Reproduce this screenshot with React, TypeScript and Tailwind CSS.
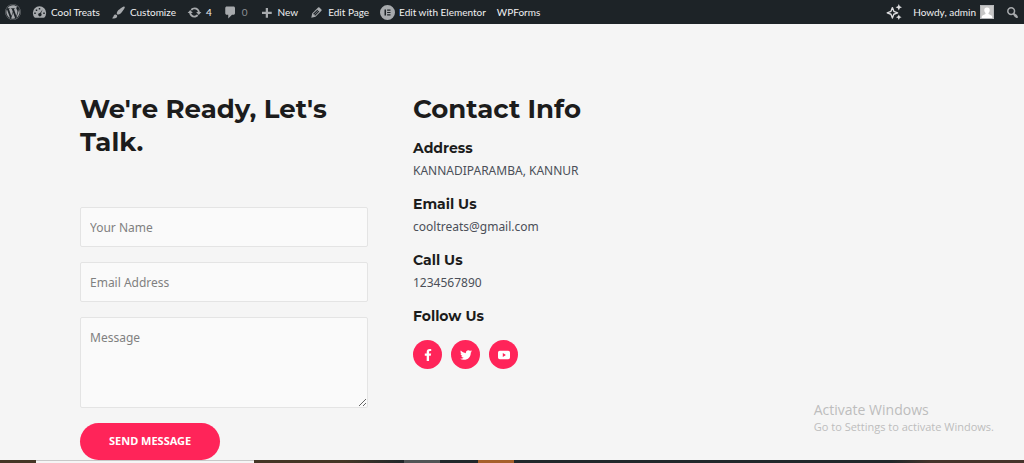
import React from 'react';
import { FaFacebookF, FaTwitter, FaWordpress } from 'react-icons/fa';

interface IconProps {
  className?: string;
  children: React.ReactNode;
}

// 20x20 grid, same as the admin bar icon set
const Icon: React.FC<IconProps> = ({ className = 'size-[15px]', children }) => (
  <svg viewBox="0 0 20 20" fill="currentColor" aria-hidden="true" className={`shrink-0 ${className}`}>
    {children}
  </svg>
);

const DashboardIcon = () => (
  <Icon>
    <path
      fillRule="evenodd"
      d="M3.8 17h12.4a8.9 8.9 0 1 0-12.4 0zM9 4h2v2H9zM5 6h2v2H5zM14.3 5.6 12 11.1a2.3 2.3 0 1 1-1.3-.5zM3 10h2v2H3zM15 10h2v2h-2z"
    />
  </Icon>
);

const BrushIcon = () => (
  <Icon>
    <path d="M18.33 3.57s.27-.8-.31-1.36c-.53-.52-1.22-.24-1.22-.24-.61.3-5.76 3.47-7.67 5.57-.86.96-2.06 3.79-1.09 4.82.92.98 3.96-.17 4.79-1 2.06-2.06 5.21-7.17 5.5-7.79zM1.4 17.65c2.37-1.56 1.46-3.41 3.23-4.64.93-.65 2.22-.62 3.08.29.63.67.8 2.57-.16 3.46-1.57 1.45-4 1.55-6.15.89z" />
  </Icon>
);

const UpdateIcon = () => (
  <Icon>
    <path d="M10.2 3.28c3.53 0 6.43 2.61 6.92 6h2.08l-3.5 4-3.5-4h2.32c-.45-1.97-2.21-3.45-4.32-3.45-1.45 0-2.73.71-3.54 1.78L4.95 5.66C6.23 4.2 8.11 3.28 10.2 3.28zm-.4 13.44c-3.52 0-6.43-2.61-6.92-6H.8l3.5-4 3.5 4H5.48c.45 1.97 2.21 3.45 4.32 3.45 1.45 0 2.73-.71 3.54-1.78l1.71 1.95c-1.28 1.46-3.15 2.38-5.25 2.38z" />
  </Icon>
);

const CommentIcon = () => (
  <Icon>
    <path d="M5 2h9c1.1 0 2 .9 2 2v7c0 1.1-.9 2-2 2h-2l-5 5v-5H5c-1.1 0-2-.9-2-2V4c0-1.1.9-2 2-2z" />
  </Icon>
);

const PlusIcon = () => (
  <Icon>
    <path d="M17 9v3h-5v5H9v-5H4V9h5V4h3v5z" />
  </Icon>
);

const EditIcon = () => (
  <Icon>
    <path
      fillRule="evenodd"
      d="M13.89 3.39l2.71 2.72c.46.46.42 1.24.03 1.64l-8.01 8.02-5.56 1.16 1.16-5.58s7.6-7.63 7.99-8.03c.39-.39 1.22-.39 1.68.07zm-2.73 2.79l-5.59 5.61 1.11 1.11 5.54-5.65zm-2.97 8.23l5.58-5.6-1.07-1.08-5.59 5.6z"
    />
  </Icon>
);

const ElementorIcon = () => (
  <Icon>
    <path fillRule="evenodd" d="M10 0a10 10 0 1 1 0 20 10 10 0 0 1 0-20zM6 6v8h2V6zM9.5 6v1.6H14V6zM9.5 9.2v1.6H14V9.2zM9.5 12.4V14H14v-1.6z" />
  </Icon>
);

const SparkleIcon = () => (
  <Icon className="size-4 text-[#dcdcde]">
    <path
      d="M8 4.5 9.8 9.2 14.5 11 9.8 12.8 8 17.5 6.2 12.8 1.5 11 6.2 9.2z"
      fill="none"
      stroke="currentColor"
      strokeWidth="1.7"
      strokeLinejoin="round"
    />
    <path d="M16 0l1.2 2.8L20 4l-2.8 1.2L16 8l-1.2-2.8L12 4l2.8-1.2zM16 13l1.1 2.4 2.4 1.1-2.4 1.1L16 20l-1.1-2.4-2.4-1.1 2.4-1.1z" />
  </Icon>
);

const SearchIcon = () => (
  <Icon>
    <path
      fillRule="evenodd"
      d="M12.14 4.18c1.87 1.87 2.11 4.75.72 6.89.12.1.22.21.36.31.2.16.47.36.81.59.34.24.56.39.66.47.42.31.73.57.94.78.32.32.6.65.84 1 .25.35.44.69.59 1.04.14.35.21.68.18 1-.02.32-.14.59-.36.81s-.49.34-.81.36c-.31.02-.65-.04-.99-.19-.35-.14-.7-.34-1.04-.59-.35-.24-.68-.52-1-.84-.21-.21-.47-.52-.77-.93-.1-.13-.25-.35-.47-.66-.22-.32-.4-.57-.56-.78-.16-.2-.29-.35-.44-.5-2.07 1.09-4.69.76-6.44-.98-2.14-2.15-2.14-5.64 0-7.78 2.15-2.15 5.63-2.15 7.78 0zm-1.41 6.36c1.36-1.37 1.36-3.58 0-4.95-1.37-1.37-3.59-1.37-4.95 0-1.37 1.37-1.37 3.58 0 4.95 1.36 1.37 3.58 1.37 4.95 0z"
    />
  </Icon>
);

const YoutubeIcon = () => (
  <Icon className="size-3">
    <path fillRule="evenodd" d="M3 3h14a3 3 0 0 1 3 3v8a3 3 0 0 1-3 3H3a3 3 0 0 1-3-3V6a3 3 0 0 1 3-3zM8 6.8v6.4l5.2-3.2z" />
  </Icon>
);

interface BarLinkProps {
  icon?: React.ReactNode;
  label: string;
  muted?: boolean;
}

const BarLink: React.FC<BarLinkProps> = ({ icon, label, muted }) => (
  <a href="#" className="flex items-center gap-1 whitespace-nowrap">
    {icon}
    <span className={muted ? 'text-[#8c8f94]' : 'text-[#f0f0f1]'}>{label}</span>
  </a>
);

const AdminBar = () => (
  <header className="flex h-6 items-center justify-between bg-[#1d2327] pr-1 pl-[5px] font-['Lato','Noto_Sans',sans-serif] text-[10px] text-[#a7aaad]">
    <nav className="flex items-center gap-[11px]">
      <a href="#" aria-label="About WordPress">
        <FaWordpress className="size-4" />
      </a>
      <BarLink icon={<DashboardIcon />} label="Cool Treats" />
      <BarLink icon={<BrushIcon />} label="Customize" />
      <BarLink icon={<UpdateIcon />} label="4" />
      <BarLink icon={<CommentIcon />} label="0" muted />
      <BarLink icon={<PlusIcon />} label="New" />
      <BarLink icon={<EditIcon />} label="Edit Page" />
      <BarLink icon={<ElementorIcon />} label="Edit with Elementor" />
      <BarLink label="WPForms" />
    </nav>
    <div className="flex items-center gap-[11px]">
      <button type="button" aria-label="Assistant">
        <SparkleIcon />
      </button>
      <a href="#" className="flex items-center gap-1 text-[#f0f0f1]">
        Howdy, admin
        <svg viewBox="0 0 14 14" aria-hidden="true" className="size-[14px]">
          <path fill="#c6c6c6" d="M0 0h14v14H0z" />
          <path fill="#fff" d="M7 2.5a2.7 2.7 0 0 1 2.7 3c-.1 1.3-.7 2-1.2 2.6v.9l3 1.4c.6.4.8 1.2.8 2.6H1.7c0-1.4.2-2.2.8-2.6l3-1.4v-.9C5 7.5 4.4 6.8 4.3 5.5A2.7 2.7 0 0 1 7 2.5z" />
          <path fill="none" stroke="#b4b6b9" d="M.5.5h13v13H.5z" />
        </svg>
      </a>
      <button type="button" aria-label="Search">
        <SearchIcon />
      </button>
    </div>
  </header>
);

const fieldClass =
  'block w-full rounded-[2px] border border-[#e4e4e4] bg-[#fafafa] px-[9px] text-xs text-[#666] placeholder:text-[#808080] outline-none';

const ContactForm = () => (
  <form className="mt-12 flex flex-col items-start gap-[15px]" onSubmit={(e) => e.preventDefault()}>
    <input type="text" aria-label="Your Name" placeholder="Your Name" className={`${fieldClass} h-10`} />
    <input type="email" aria-label="Email Address" placeholder="Email Address" className={`${fieldClass} h-10`} />
    <textarea aria-label="Message" placeholder="Message" className={`${fieldClass} h-[91px] resize-y py-[10px] leading-5`} />
    <button type="submit" className="h-[37px] rounded-full bg-[#ff2459] px-[29px] text-[11px] font-bold text-white">
      SEND MESSAGE
    </button>
  </form>
);

const details = [
  { title: 'Address', value: 'KANNADIPARAMBA, KANNUR' },
  { title: 'Email Us', value: 'cooltreats@gmail.com' },
  { title: 'Call Us', value: '1234567890' },
];

const socials = [
  { name: 'Facebook', icon: <FaFacebookF className="size-3" /> },
  { name: 'Twitter', icon: <FaTwitter className="size-3" /> },
  { name: 'YouTube', icon: <YoutubeIcon /> },
];

const headingFont = "font-['Montserrat','Inter',sans-serif] font-bold text-[#1c1c1c]";

const ContactInfo = () => (
  <section>
    <h2 className={`${headingFont} mb-3 text-[26px] leading-[33px]`}>Contact Info</h2>
    {details.map((item) => (
      <div key={item.title} className="mb-3">
        <h3 className={`${headingFont} mb-0.5 text-sm leading-5`}>{item.title}</h3>
        <p className="text-xs leading-[22px]">{item.value}</p>
      </div>
    ))}
    <h3 className={`${headingFont} text-sm leading-5`}>Follow Us</h3>
    <div className="mt-[14px] flex gap-[9px]">
      {socials.map((s) => (
        <a
          key={s.name}
          href="#"
          aria-label={s.name}
          className="flex size-[29px] items-center justify-center rounded-full bg-[#ff2459] text-white"
        >
          {s.icon}
        </a>
      ))}
    </div>
  </section>
);

// Top edge of the banner photo that follows the contact section
const BannerEdge = () => (
  <div className="flex h-[3px] bg-[#20272a]">
    <div className="w-[3.5%] bg-[#443625]" />
    <div className="w-[21.3%] border-t border-[#c8c8c8] bg-[#f5f5f5]" />
    <div className="w-[14.7%] bg-linear-to-r from-[#443625] from-60% to-[#20272a]" />
    <div className="w-[3.5%] bg-[#515556]" />
    <div className="w-[3.7%]" />
    <div className="w-[3.5%] bg-[#a65f2a]" />
    <div className="flex-1" />
    <div className="w-[13%] bg-linear-to-r from-[#20272a] to-[#45342b] to-30%" />
  </div>
);

export default function App() {
  return (
    <div className="relative flex min-h-screen flex-col bg-[#f5f5f5] font-['Noto_Sans',sans-serif] text-[#4b4f58]">
      <AdminBar />
      <main className="grid flex-1 grid-cols-[1fr_2fr] gap-[45px] pt-[69px] pr-[35px] pl-20">
        <section>
          <h2 className={`${headingFont} text-[26px] leading-[33px]`}>We're Ready, Let's Talk.</h2>
          <ContactForm />
        </section>
        <ContactInfo />
      </main>
      <BannerEdge />
      <div className="pointer-events-none absolute right-[30px] bottom-7 font-['Open_Sans','Noto_Sans',sans-serif] text-[#bdbdbd]">
        <p className="text-sm leading-[18px]">Activate Windows</p>
        <p className="text-[11px] leading-4">Go to Settings to activate Windows.</p>
      </div>
    </div>
  );
}
